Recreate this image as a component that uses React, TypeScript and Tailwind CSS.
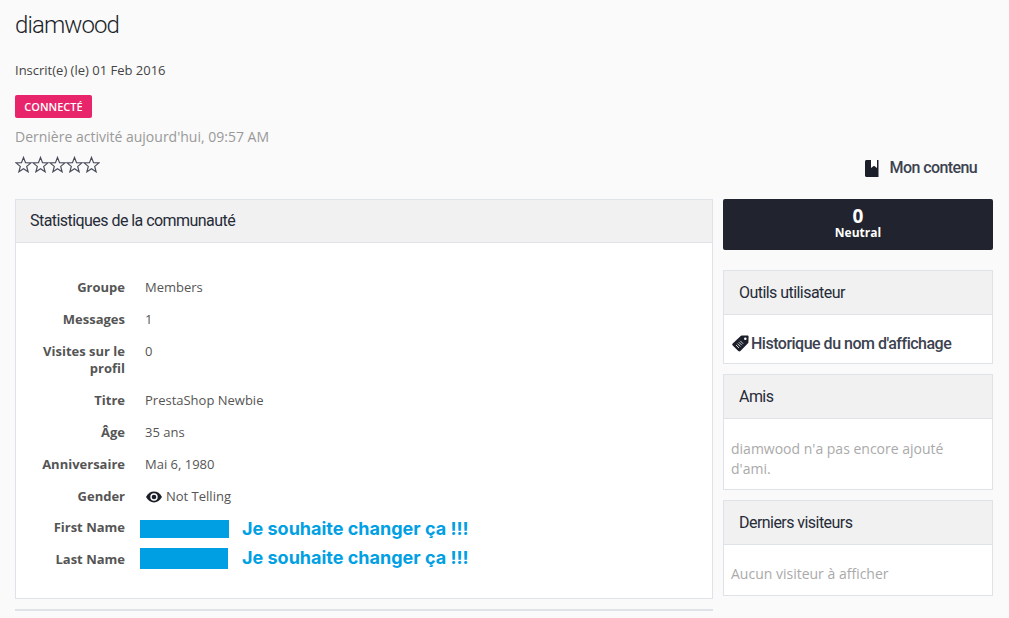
const sans = "font-['Open_Sans',sans-serif]";
const head = "font-['Roboto',sans-serif]";

function BookIcon() {
  return (
    <svg width="15" height="17" viewBox="0 0 15 17" className="shrink-0">
      <path d="M0 1.5C0 .7.7 0 1.5 0H14v17H1.5C.7 17 0 16.3 0 15.5z" fill="#1c1f29" />
      <path d="M6 0h6v8L9 5.8 6 8z" fill="#ffffff" />
      <path d="M13 0h1v17h-1z" fill="#8b8e96" />
    </svg>
  );
}

function TagIcon() {
  return (
    <svg width="17" height="17" viewBox="0 0 17 17" className="shrink-0">
      <path d="M9.6.6 15.4.4c.7 0 1.2.5 1.2 1.2l-.2 5.8c0 .4-.2.7-.4.9l-7.6 7.7c-.6.6-1.5.6-2.1 0L.7 10.6c-.6-.6-.6-1.5 0-2.1L8.7 1c.3-.2.6-.4.9-.4z" fill="#1c1f29" />
      <circle cx="13.3" cy="3.7" r="1.3" fill="#ffffff" />
      <path d="M8.2 5.8l3 3M6.8 7.2l3 3M5.4 8.6l3 3M4 10l3 3" stroke="#ffffff" strokeWidth="0.8" />
    </svg>
  );
}

function EyeIcon() {
  return (
    <svg width="16" height="12" viewBox="0 0 16 12" className="shrink-0">
      <path d="M0 6C2 2.4 4.8.6 8 .6S14 2.4 16 6c-2 3.600-4.800 5.400-8 5.400S2 9.600 0 6z" fill="#1c1f29" />
      <circle cx="8" cy="6" r="3.700" fill="#ffffff" />
      <circle cx="8" cy="6" r="2.300" fill="#1c1f29" />
    </svg>
  );
}

function Stars() {
  return (
    <div className="flex">
      {[0, 1, 2, 3, 4].map((i) => (
        <svg key={i} width="17" height="17" viewBox="0 0 17 17">
          <path
            d="M8.500 1.400 10.500 6.600 16 6.900 11.700 10.400 13.100 15.800 8.500 12.800 3.900 15.800 5.300 10.400 1 6.900 6.500 6.600z"
            fill="none"
            stroke="#4a4e5c"
            strokeWidth="1.200"
          />
        </svg>
      ))}
    </div>
  );
}

function Panel({ title, side, children }: { title: string; side?: boolean; children: React.ReactNode }) {
  return (
    <div className="border border-[#dfe3e8] bg-white">
      <div
        className={`${head} border-b border-[#dfe3e8] bg-[#f1f1f1] text-[16px] tracking-[-0.55px] text-[#262b38] ${
          side ? 'h-[44px] pl-[15px] leading-[43px]' : 'h-[43px] pl-[14px] leading-[42px]'
        }`}
      >
        {title}
      </div>
      {children}
    </div>
  );
}

function Row({ label, children }: { label: string; children: React.ReactNode }) {
  return (
    <div className="flex text-[13px] leading-[17px]">
      <div className="w-[94px] text-right font-bold text-[#555]">{label}</div>
      <div className="ml-[20px] text-[#555]">{children}</div>
    </div>
  );
}

function NameRow({ label, blockClass, textClass }: { label: string; blockClass: string; textClass: string }) {
  return (
    <div className="flex h-[17px] text-[13px] leading-[17px]">
      <div className="w-[94px] text-right font-bold text-[#555]">{label}</div>
      <div className="ml-[15px] flex items-start">
        <div className={`bg-[#009fe3] ${blockClass}`} />
        <span className={`font-['Inter',sans-serif] text-[18px] font-bold leading-[20px] text-[#00a0e3] ${textClass}`}>
          Je souhaite changer ça !!!
        </span>
      </div>
    </div>
  );
}

export default function App() {
  return (
    <div className={`${sans} h-[618px] overflow-hidden bg-[#fafafa] pl-[15px] pr-[16px]`}>
      <h1 className={`${head} pt-[10px] text-[24px] font-light leading-[30px] tracking-[-0.9px] text-[#1c1f29]`}>diamwood</h1>
      <p className="mt-[21px] text-[13px] leading-[18px] text-[#444]">Inscrit(e) (le) 01 Feb 2016</p>
      <span className="mt-[16px] block h-[23px] w-[77px] rounded-[2px] bg-[#e8246a] text-center text-[11px] font-semibold leading-[23px] text-white">
        CONNECTÉ
      </span>
      <p className="mt-[9px] text-[14px] leading-[20px] text-[#999]">Dernière activité aujourd'hui, 09:57 AM</p>
      <div className="flex h-[52px] items-start justify-between">
        <div className="mt-[9px]">
          <Stars />
        </div>
        <div className="mr-[16px] mt-[9px] flex items-center">
          <BookIcon />
          <span className={`${head} ml-[10px] text-[16px] font-medium tracking-[-0.6px] text-[#3c4250]`}>Mon contenu</span>
        </div>
      </div>

      <div className="flex gap-[10px]">
        <div className="w-[698px]">
          <Panel title="Statistiques de la communauté">
            <div className="flex h-[355px] flex-col gap-[15px] pl-[15px] pt-[36px]">
              <Row label="Groupe">Members</Row>
              <Row label="Messages">1</Row>
              <Row label="Visites sur le profil">0</Row>
              <Row label="Titre">PrestaShop Newbie</Row>
              <Row label="Âge">35 ans</Row>
              <Row label="Anniversaire">Mai 6, 1980</Row>
              <Row label="Gender">
                <span className="ml-[1px] flex items-center gap-[4px]">
                  <EyeIcon />
                  Not Telling
                </span>
              </Row>
              <div className="-mt-[1px]">
                <NameRow label="First Name" blockClass="mt-[1px] h-[18px] w-[89px] mr-[13px]" textClass="" />
              </div>
              <NameRow label="Last Name" blockClass="-mt-[3px] h-[21px] w-[88px] mr-[14px]" textClass="-mt-[3px]" />
            </div>
          </Panel>
          <div className="mt-[10px] h-[2px] bg-[#dfe3e8]" />
        </div>

        <div className="flex w-[270px] flex-col">
          <div className="h-[51px] rounded-[2px] bg-[#21242e] pt-[8px] text-center text-white">
            <div className="text-[19px] font-bold leading-[18px]">0</div>
            <div className="text-[12px] font-bold leading-[15px]">Neutral</div>
          </div>
          <div className="mt-[20px]">
            <Panel side title="Outils utilisateur">
              <div className={`${head} flex h-[48px] items-center gap-[2px] pl-[8px] pt-[9px] text-[16px] font-medium tracking-[-0.5px] text-[#3c4250]`}>
                <TagIcon />
                Historique du nom d'affichage
              </div>
            </Panel>
          </div>
          <div className="mt-[10px]">
            <Panel side title="Amis">
              <p className="px-[7px] pb-[10px] pt-[20px] text-[14px] leading-[20px] text-[#aaa]">
                diamwood n'a pas encore ajouté d'ami.
              </p>
            </Panel>
          </div>
          <div className="mt-[10px]">
            <Panel side title="Derniers visiteurs">
              <p className="px-[7px] pb-[11px] pt-[19px] text-[14px] leading-[20px] text-[#aaa]">
                Aucun visiteur à afficher
              </p>
            </Panel>
          </div>
        </div>
      </div>
    </div>
  );
}
